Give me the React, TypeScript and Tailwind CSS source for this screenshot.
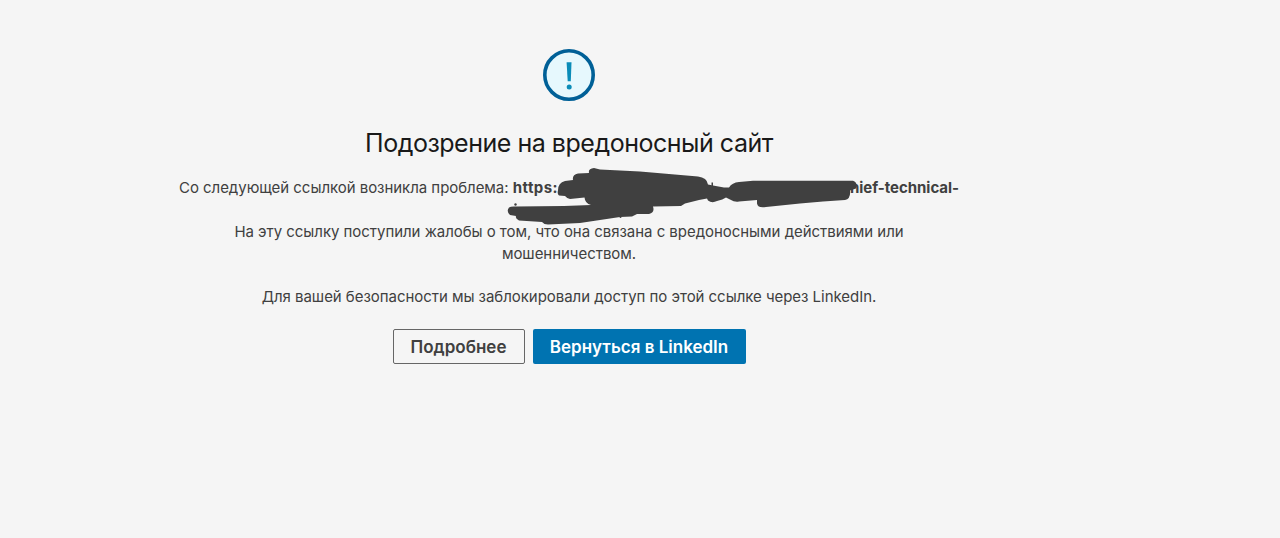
import React from "react";

function WarningIcon() {
    return (
        <svg className="h-[52px] w-[52px]" viewBox="0 0 52 52" fill="none">
            <circle cx="26" cy="26" r="24.2" fill="#e6f8fd" stroke="#006097" strokeWidth="3.6" />
            <path d="M23.6 13.2h4.9l-.7 19h-3.1z" fill="#0a8cb8" />
            <circle cx="26.2" cy="38" r="2.5" fill="#0a8cb8" />
        </svg>
    )
}

function Redaction() {
    return (
        <svg className="absolute left-[321px] -top-[17px] h-[70px] w-[360px]" viewBox="500 159.5 360 70" fill="#404040">
            <path d="M558 190Q558 182 565 180.500L573 179.500Q572 174 578 173L589 172.500Q588 168 594 167.500Q597 168 600 169L640 171L698 176Q707 177 708 184L713 185L724 187L729 187Q732 182 739 181.500L753 180.300L853 180.300Q858 182 856 188L850 190Q851 198 845 199.500L823 201L800 203L766 206.500Q758 208 757 203L757 199.500L739 201Q735 202 730 199L726 197Q723 199 717 200.500Q712 203 708 200L707 198L699 199.500L685 203L681 205.500L653 206Q655 212 649 213.500L637 213.500L632 216L620 216.500L580 222.500L548 224Q544 224 542 221.500L519 220Q515 218 516 215.500L510 214.500Q506 211 509 207Q511 205.500 516 206L564 205.500L591 204.500Q585 203 584.500 197L570 198.500Q567 198 565 195.500L559 195Q557 193 558 190Z" />
            <circle cx="515.500" cy="204" r="1.2" />
            <circle cx="620.500" cy="216.500" r="1" />
            <path d="M711.500 182h1.500v4h-1.500z" />
        </svg>
    )
}

export default function App() {
    return (
        <div className="min-h-screen w-full bg-[#f5f5f5] font-['Inter','Liberation_Sans',sans-serif]">
            <div className="flex w-[1138px] flex-col items-center pt-[49px]">
                <WarningIcon />
                <h1 className="mt-6 text-[25px] leading-9 tracking-[-0.48px] whitespace-nowrap text-[#191919]">Подозрение на вредоносный сайт</h1>
                <div className="mt-4 flex w-full flex-col items-center text-[15px] leading-[21.7px] tracking-[-0.04px] text-[#404040]">
                    <div className="relative flex h-[44px] w-[780px] justify-between whitespace-nowrap">
                        <p>Со следующей ссылкой возникла проблема: <strong className="font-bold tracking-[0.45px]">https:</strong></p>
                        <strong className="font-bold">hief-technical-</strong>
                        <Redaction />
                    </div>
                    <p className="text-center whitespace-nowrap">
                        На эту ссылку поступили жалобы о том, что она связана с вредоносными действиями или
                        <br />
                        мошенничеством.
                    </p>
                    <p className="mt-[22px] whitespace-nowrap">Для вашей безопасности мы заблокировали доступ по этой ссылке через LinkedIn.</p>
                </div>
                <div className="mt-[21px] flex gap-2 text-[17px] font-semibold whitespace-nowrap">
                    <button className="h-[35px] w-[132px] rounded-[2px] border border-[#666666] pt-0.5 text-[#404040]">Подробнее</button>
                    <button className="h-[35px] w-[213px] rounded-[2px] bg-[#0073b1] pt-0.5 text-white">Вернуться в LinkedIn</button>
                </div>
            </div>
        </div>
    )
}
